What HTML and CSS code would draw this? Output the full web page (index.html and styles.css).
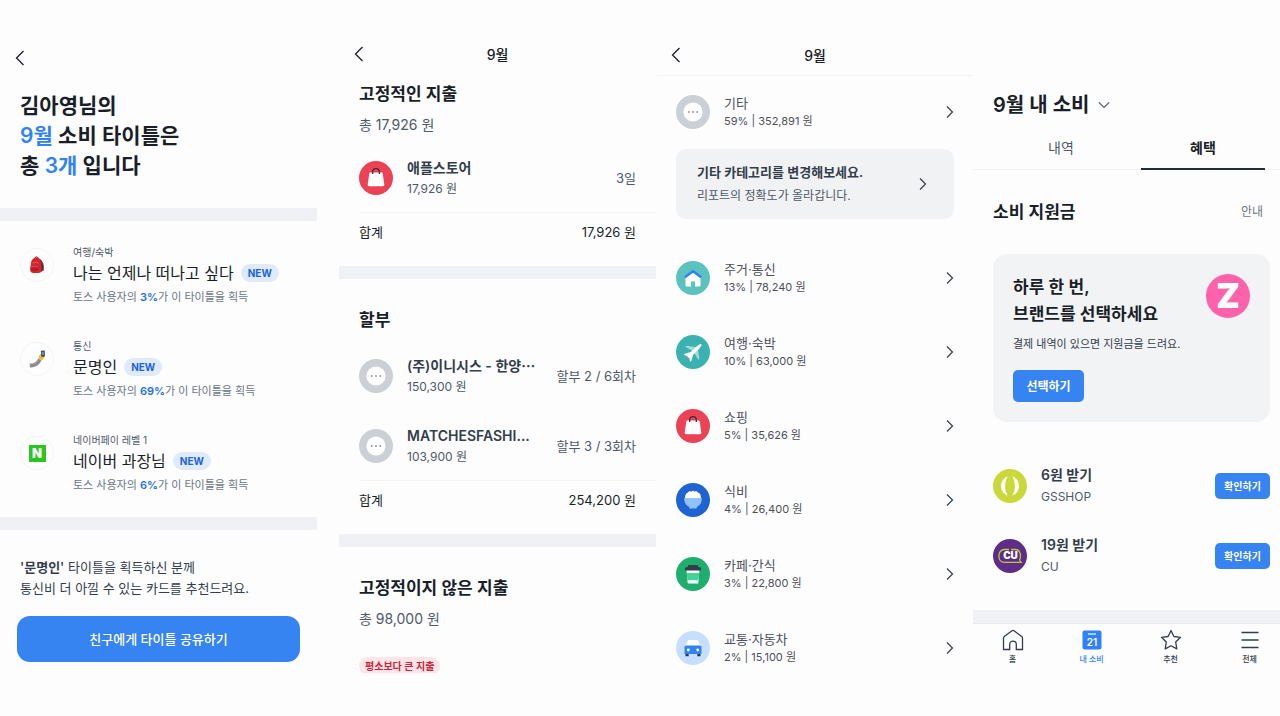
FILE: index.html
```html
<!DOCTYPE html>
<html lang="ko">
<head>
  <meta charset="UTF-8">
  <meta name="viewport" content="width=device-width, initial-scale=1">
  <title>9월 소비</title>
  <link rel="stylesheet" href="styles.css">
</head>
<body>
  <!-- Shared icons -->
  <svg class="sprite" aria-hidden="true">
    <symbol id="back" viewBox="0 0 10 16"><path d="M8.5 1 1.5 8l7 7" fill="none" stroke="currentColor" stroke-width="1.3"/></symbol>
    <symbol id="next" viewBox="0 0 8 14"><path d="M1 1.5 6.5 7 1 12.5" fill="none" stroke="currentColor" stroke-width="1.2"/></symbol>
    <symbol id="etc" viewBox="0 0 34 34">
      <circle cx="17" cy="17" r="17" fill="#cbd0d6"/>
      <circle cx="17" cy="17" r="9.6" fill="#fff"/>
      <g fill="#8b95a1"><circle cx="12.8" cy="17" r=".9"/><circle cx="17" cy="17" r=".9"/><circle cx="21.2" cy="17" r=".9"/></g>
    </symbol>
    <symbol id="bag" viewBox="0 0 34 34">
      <circle cx="17" cy="17" r="17" fill="#eb4255"/>
      <path d="M11.5 11.500h11c.7 0 1.100.4 1.200 1l1.600 11c.1 1-.5 1.700-1.500 1.700H10.200c-1 0-1.600-.7-1.500-1.700l1.600-11c.1-.6.5-1 1.200-1z" fill="#fff"/>
      <path d="M13.700 13v-2.300c0-4.200 6.600-4.200 6.600 0V13" fill="none" stroke="#3a3038" stroke-width="1.3"/>
    </symbol>
  </svg>

  <main class="screens">
    <!-- Titles -->
    <section class="screen titles">
      <header class="topbar">
        <button class="back" aria-label="뒤로"><svg><use href="#back"/></svg></button>
      </header>
      <h1 class="headline">김아영님의<br><em>9월</em> 소비 타이틀은<br>총 <em>3개</em> 입니다</h1>
      <div class="band"></div>
      <ul class="title-list">
        <li>
          <span class="medal">
            <svg width="18" height="18" viewBox="0 0 18 18">
              <path d="M11 3c3 0 4.500 4 4.300 11l-2.300 2z" fill="#5e2630"/>
              <path d="M14 6c1.500 2 1.800 6 1 9" fill="none" stroke="#7d3c40" stroke-width="1"/>
              <path d="M7 2c0-1.500 3-1.500 3 0" fill="none" stroke="#8e1c23" stroke-width="1"/>
              <path d="M3 6.500C3.500 3.500 5.500 1.500 8.500 1.500S13 4 13.200 7.500l.3 7c0 2-1.500 2.500-5.700 2.500-4 0-5.500-.8-5.500-2.800z" fill="#d5252e"/>
              <path d="M2.500 10.500c3-1 5.500-.8 8 0v4c-2 1-6 1-8-.5z" fill="#bb1d27"/>
              <path d="M4.500 7.200c2-1 4-.8 6 0M3 11c2.500-.8 5-.6 7 .2" fill="none" stroke="#f06a68" stroke-width=".7"/>
            </svg>
          </span>
          <div>
            <p class="kind">여행/숙박</p>
            <h2>나는 언제나 떠나고 싶다 <span class="new">NEW</span></h2>
            <p class="rate">토스 사용자의 <b>3%</b>가 이 타이틀을 획득</p>
          </div>
        </li>
        <li>
          <span class="medal">
            <svg width="18" height="18" viewBox="0 0 18 18">
              <path d="M1.500 13.500c4 .4 7-1.500 9-5.500l3 2.500c-2 4.500-6 7-11.500 7z" fill="#9a9a9c"/>
              <path d="M2 16c5 0 8-2 10-6" fill="none" stroke="#777" stroke-width=".8"/>
              <path d="m10.500 8 1-3 2-1.500 3 1.500-.5 3-2.500 2.500z" fill="#f3bd2f"/>
              <path d="m12.800.8 4-.3v6l-3.300.5z" fill="#384859"/>
              <path d="m13.700 1.800 2.200-.1v3l-1.900.3z" fill="#4f9bd0"/>
            </svg>
          </span>
          <div>
            <p class="kind">통신</p>
            <h2>문명인 <span class="new">NEW</span></h2>
            <p class="rate">토스 사용자의 <b>69%</b>가 이 타이틀을 획득</p>
          </div>
        </li>
        <li>
          <span class="medal"><span class="naver">N</span></span>
          <div>
            <p class="kind">네이버페이 레벨 1</p>
            <h2>네이버 과장님 <span class="new">NEW</span></h2>
            <p class="rate">토스 사용자의 <b>6%</b>가 이 타이틀을 획득</p>
          </div>
        </li>
      </ul>
      <div class="band"></div>
      <p class="card-tip"><b>'문명인'</b> 타이틀을 획득하신 분께<br>통신비 더 아낄 수 있는 카드를 추천드려요.</p>
      <button class="share">친구에게 타이틀 공유하기</button>
    </section>

    <!-- Monthly spending -->
    <section class="screen monthly">
      <header class="topbar">
        <button class="back" aria-label="뒤로"><svg><use href="#back"/></svg></button>
        <h1>9월</h1>
      </header>
      <div class="group fixed">
        <h2>고정적인 지출</h2>
        <p class="sum">총 17,926 원</p>
        <ul class="payments">
          <li>
            <svg class="icon"><use href="#bag"/></svg>
            <div><h3>애플스토어</h3><p>17,926 원</p></div>
            <span>3일</span>
          </li>
        </ul>
        <div class="total"><span>합계</span><span>17,926 원</span></div>
      </div>
      <div class="band"></div>
      <div class="group">
        <h2>할부</h2>
        <ul class="payments">
          <li>
            <svg class="icon"><use href="#etc"/></svg>
            <div><h3>(주)이니시스 - 한양⋯</h3><p>150,300 원</p></div>
            <span>할부 2 / 6회차</span>
          </li>
          <li>
            <svg class="icon"><use href="#etc"/></svg>
            <div><h3>MATCHESFASHI...</h3><p>103,900 원</p></div>
            <span>할부 3 / 3회차</span>
          </li>
        </ul>
        <div class="total"><span>합계</span><span>254,200 원</span></div>
      </div>
      <div class="band"></div>
      <div class="group">
        <h2>고정적이지 않은 지출</h2>
        <p class="sum">총 98,000 원</p>
        <div class="flag-row"><span class="flag">평소보다 큰 지출</span></div>
      </div>
    </section>

    <!-- Categories -->
    <section class="screen categories">
      <header class="topbar">
        <button class="back" aria-label="뒤로"><svg><use href="#back"/></svg></button>
        <h1>9월</h1>
      </header>
      <div class="category-list">
        <a class="category" href="#">
          <svg class="icon"><use href="#etc"/></svg>
          <div><h2>기타</h2><p>59% | 352,891 원</p></div>
          <svg class="next"><use href="#next"/></svg>
        </a>
      </div>
      <a class="notice" href="#">
        <div><h2>기타 카테고리를 변경해보세요.</h2><p>리포트의 정확도가 올라갑니다.</p></div>
        <svg class="next"><use href="#next"/></svg>
      </a>
      <div class="category-list rest">
        <a class="category" href="#">
          <svg class="icon" viewBox="0 0 34 34">
            <circle cx="17" cy="17" r="17" fill="#5bc2c0"/>
            <path d="M9.500 15.500 17 10l7.500 5.500v8.700c0 .8-.4 1.200-1.200 1.200H19V20.500h-4v4.900h-4.300c-.8 0-1.200-.4-1.200-1.200z" fill="#fff"/>
            <path d="m8.800 16.300 7.500-5.600c.4-.3 1-.3 1.400 0l7.500 5.600" fill="none" stroke="#3182f6" stroke-width="2.6"/>
          </svg>
          <div><h2>주거·통신</h2><p>13% | 78,240 원</p></div>
          <svg class="next"><use href="#next"/></svg>
        </a>
        <a class="category" href="#">
          <svg class="icon" viewBox="0 0 34 34">
            <circle cx="17" cy="17" r="17" fill="#3bb2b0"/>
            <path d="m9 11.500 2-.7 9.500 1.500-3.500 4zM22.500 25l.8-2-1.500-9.500-4 3.800z" fill="#a5dad9"/>
            <path d="M23.800 9.200c1.600-.8 2.300 0 1.500 1.500-1.200 2-3 4-8.300 9.200l-1.500 5.800-1.500 1-.8-4.300c-1 .4-2 .2-1.500-1.200L8 20l1-1.500 5.500-1.200c5-5 7.300-7 9.300-8.100z" fill="#fff"/>
          </svg>
          <div><h2>여행·숙박</h2><p>10% | 63,000 원</p></div>
          <svg class="next"><use href="#next"/></svg>
        </a>
        <a class="category" href="#">
          <svg class="icon"><use href="#bag"/></svg>
          <div><h2>쇼핑</h2><p>5% | 35,626 원</p></div>
          <svg class="next"><use href="#next"/></svg>
        </a>
        <a class="category" href="#">
          <svg class="icon" viewBox="0 0 34 34">
            <circle cx="17" cy="17" r="17" fill="#1f63d3"/>
            <path d="M9 15.500c0-4 1.500-5.800 3-5.800.5-1.700 2.500-1.900 3.300-1 1-1.300 2.700-1.300 3.500 0 1.200-.9 2.800-.3 3.200 1 1.800 0 3 1.800 3 5.800z" fill="#fff"/>
            <path d="M8.200 15h17.600c0 4.500-1.500 7-5.100 9v1.500h-7.400V24c-3.600-2-5.100-4.500-5.100-9z" fill="#90c2ff"/>
          </svg>
          <div><h2>식비</h2><p>4% | 26,400 원</p></div>
          <svg class="next"><use href="#next"/></svg>
        </a>
        <a class="category" href="#">
          <svg class="icon" viewBox="0 0 34 34">
            <circle cx="17" cy="17" r="17" fill="#1eaf6e"/>
            <path d="M10.500 13h13l-1.200 12.700c-.1.600-.4.900-1 .9h-8.600c-.6 0-.9-.3-1-.9z" fill="#fff"/>
            <path d="M10.800 16h12.400l-.7 7.200h-11z" fill="#44d296"/>
            <path d="M12.500 8h9l1.200 2.200H24c.7 0 1 .3 1 1v2.300H9v-2.300c0-.7.300-1 1-1h1.300z" fill="#333d4b"/>
          </svg>
          <div><h2>카페·간식</h2><p>3% | 22,800 원</p></div>
          <svg class="next"><use href="#next"/></svg>
        </a>
        <a class="category" href="#">
          <svg class="icon" viewBox="0 0 34 34">
            <circle cx="17" cy="17" r="17" fill="#c6deff"/>
            <path d="M13.200 9h7.600c.7 0 1.200.4 1.500 1l2 5H9.700l2-5c.3-.6.800-1 1.500-1z" fill="#fff"/>
            <path d="M9.500 22h3.200v3.200H9.500zM21.300 22h3.200v3.200h-3.200z" fill="#2b3950"/>
            <path d="M10.500 14.500h13c1.200 0 2 .8 2 2V23h-17v-6.500c0-1.200.8-2 2-2z" fill="#3182f6"/>
            <circle cx="12.300" cy="19" r="1.4" fill="#fff"/><circle cx="21.700" cy="19" r="1.4" fill="#fff"/>
          </svg>
          <div><h2>교통·자동차</h2><p>2% | 15,100 원</p></div>
          <svg class="next"><use href="#next"/></svg>
        </a>
      </div>
    </section>

    <!-- Benefits -->
    <section class="screen benefits">
      <h1>9월 내 소비
        <svg width="12" height="8" viewBox="0 0 12 8"><path d="m.8 1.300 5.200 5.200 5.200-5.200" fill="none" stroke="#4e5968" stroke-width="1.2"/></svg>
      </h1>
      <div class="tabs" role="tablist">
        <button role="tab" aria-selected="false">내역</button>
        <button role="tab" aria-selected="true">혜택</button>
      </div>
      <div class="support-head"><h2>소비 지원금</h2><a href="#">안내</a></div>
      <div class="promo">
        <div>
          <h3>하루 한 번,<br>브랜드를 선택하세요</h3>
          <p>결제 내역이 있으면 지원금을 드려요.</p>
          <button>선택하기</button>
        </div>
        <span class="zigzag">Z</span>
      </div>
      <ul class="rewards">
        <li>
          <svg class="icon" viewBox="0 0 34 34">
            <circle cx="17" cy="17" r="17" fill="#c9d93b"/>
            <path d="M14.800 7.500c-9 2.500-9 16.500 0 19-3.600-5-3.600-14 0-19zM19.200 7.500c9 2.500 9 16.500 0 19 3.600-5 3.600-14 0-19z" fill="#fff"/>
          </svg>
          <div><h3>6원 받기</h3><p>GSSHOP</p></div>
          <button>확인하기</button>
        </li>
        <li>
          <svg class="icon" viewBox="0 0 34 34">
            <circle cx="17" cy="17" r="17" fill="#5f2d87"/>
            <path d="M16 10.500h-4.500c-7.500 0-7.500 12.800 0 12.800H28c-1.200-1-1.300-1.800-1.200-3 1.800-5-.3-9.800-4.300-9.800H18" fill="none" stroke="#b4cf3a" stroke-width="1.3"/>
            <text x="17.500" y="20.300" class="cu">CU</text>
          </svg>
          <div><h3>19원 받기</h3><p>CU</p></div>
          <button>확인하기</button>
        </li>
      </ul>
      <div class="band"></div>
      <nav class="tabbar">
        <a href="#">
          <svg viewBox="0 0 22 22"><path d="M1.500 9.200c0-.8.200-1.300.8-1.800L10 1.800c.7-.5 1.300-.5 2 0l7.700 5.600c.6.5.8 1 .8 1.800v11.300h-6.200v-5.200c0-4.300-6.600-4.300-6.600 0v5.200H1.500z" fill="none" stroke="#333d4b" stroke-width="1.3"/></svg>
          홈
        </a>
        <a class="current" href="#">
          <svg viewBox="0 0 22 22"><rect x="1.500" y="1.500" width="19" height="19" rx="2" fill="#3182f6"/><path d="M7 5h8" stroke="#fff" stroke-width="1.2"/><text x="11" y="16.500" class="day">21</text></svg>
          내 소비
        </a>
        <a href="#">
          <svg viewBox="0 0 22 22"><path d="m11 1.500 2.900 6 6.600.8-4.800 4.700 1.100 6.900-5.800-3.200-5.800 3.200L6.300 13 1.500 8.300l6.600-.8z" fill="none" stroke="#333d4b" stroke-width="1.3" stroke-linejoin="round"/></svg>
          추천
        </a>
        <a href="#">
          <svg viewBox="0 0 22 22"><path d="M2.500 3.500h17M2.500 11h17M2.500 18.500h17" stroke="#333d4b" stroke-width="1.3"/></svg>
          전체
        </a>
      </nav>
    </section>
  </main>
</body>
</html>
```

FILE: styles.css
```css
* {
  box-sizing: border-box;
}
body {
  margin: 0;
  background: #fdfdfe;
  color: #191f28;
  font-family: Inter, "Noto Sans CJK KR", sans-serif;
  font-size: 13px;
}
h1, h2, h3, p, ul {
  margin: 0;
  padding: 0;
  font-weight: 400;
}
ul {
  list-style: none;
}
a {
  color: inherit;
  text-decoration: none;
}
button {
  border: none;
  padding: 0 0 2px;
  background: none;
  color: inherit;
  font-family: inherit;
  cursor: pointer;
}
svg {
  display: block;
  flex: none;
}
.sprite {
  position: absolute;
  width: 0;
  height: 0;
}
.screens {
  display: grid;
  grid-template-columns: 339fr 318fr 316fr 307fr;
  min-height: 100vh;
}
.screen {
  min-width: 0;
  overflow: hidden;
}
.titles {
  margin-right: 22px;
}
.monthly {
  margin-right: 1px;
}
.band {
  height: 13px;
  background: #f0f1f4;
}
.icon {
  width: 34px;
  height: 34px;
}
.next {
  width: 8px;
  height: 14px;
  color: #333d4b;
}

/* top bar */
.topbar {
  display: grid;
  grid-template-columns: 26px 1fr 26px;
  align-items: center;
  padding: 42px 15px 0;
  line-height: 26px;
}
.topbar h1 {
  text-align: center;
  font-size: 14px;
  font-weight: 500;
}
.back {
  height: 26px;
}
.back svg {
  width: 10px;
  height: 16px;
}

/* titles */
.titles .topbar {
  padding-top: 46px;
}
.headline {
  padding: 19px 20px 27px;
  font-size: 21px;
  font-weight: 600;
  line-height: 30px;
}
.headline em {
  color: #3182f6;
  font-style: normal;
}
.title-list {
  display: flex;
  flex-direction: column;
  gap: 32px;
  padding: 24px 20px 22px;
}
.title-list li {
  display: flex;
  gap: 19px;
}
.medal {
  display: flex;
  align-items: center;
  justify-content: center;
  width: 34px;
  height: 34px;
  margin-top: 3px;
  border: 1px solid #f3f4f5;
  border-radius: 50%;
}
.naver {
  width: 17px;
  background: #2ac61e;
  color: #fff;
  font-size: 13px;
  font-weight: 900;
  line-height: 17px;
  text-align: center;
}
.kind {
  color: #4e5968;
  font-size: 10px;
  line-height: 14px;
}
.title-list h2 {
  display: flex;
  align-items: center;
  gap: 7px;
  font-size: 16px;
  line-height: 28px;
}
.new {
  padding: 0 7px;
  border-radius: 9px;
  background: #dfeafc;
  color: #1b64da;
  font-size: 10px;
  font-weight: 700;
  line-height: 18px;
}
.rate {
  color: #6b7684;
  font-size: 11px;
  line-height: 20px;
}
.rate b {
  color: #1b6fe8;
  font-weight: 600;
}
.card-tip {
  padding: 27px 20px 17px;
  color: #333d4b;
  line-height: 21px;
}
.card-tip b {
  font-weight: 600;
}
.share {
  display: block;
  width: calc(100% - 34px);
  height: 46px;
  margin: 0 17px;
  border-radius: 13px;
  background: #3683f2;
  color: #fff;
  font-size: 13px;
  font-weight: 500;
}

/* monthly spending */
.group {
  padding: 28px 0 24px 20px;
}
.group.fixed {
  padding-top: 13px;
}
.group h2 {
  font-size: 17px;
  font-weight: 600;
  line-height: 26px;
}
.sum {
  margin-top: 8px;
  color: #4e5968;
  font-size: 14px;
  line-height: 20px;
}
.payments {
  display: flex;
  flex-direction: column;
  gap: 28px;
  margin-top: 22px;
  padding: 0 20px 13px 0;
  line-height: 21px;
}
.payments li {
  display: flex;
  align-items: center;
}
.payments div {
  flex: 1;
  margin-left: 14px;
}
.payments h3 {
  color: #333d4b;
  font-size: 14px;
  font-weight: 600;
}
.payments p {
  color: #4e5968;
  font-size: 12px;
}
.payments span {
  color: #4e5968;
  font-size: 13px;
}
.total {
  display: flex;
  justify-content: space-between;
  padding: 9px 20px 0 0;
  border-top: 1px solid #f2f3f5;
  font-size: 13px;
  line-height: 20px;
}
.flag-row {
  height: 16px;
  margin-top: 28px;
  overflow: hidden;
}
.flag {
  display: block;
  width: fit-content;
  padding: 0 6px;
  border-radius: 9px;
  background: #fde4e7;
  color: #c9243b;
  font-size: 10px;
  font-weight: 600;
  line-height: 18px;
}

/* categories */
.categories .topbar {
  padding: 43px 14px 6px;
  border-bottom: 1px solid #f2f3f5;
}
.category-list {
  display: flex;
  flex-direction: column;
  gap: 38px;
  padding: 18px 19px 0;
}
.category-list.rest {
  padding-top: 41px;
}
.category {
  display: flex;
  align-items: center;
  color: #4e5059;
  line-height: 18px;
}
.category div {
  flex: 1;
  margin-left: 14px;
}
.category h2 {
  font-size: 13px;
}
.category p {
  font-size: 11px;
}
.notice {
  display: flex;
  align-items: center;
  justify-content: space-between;
  margin: 19px 19px 0;
  padding: 12px 27px 12px 21px;
  border-radius: 10px;
  background: #f1f2f4;
  line-height: 23px;
}
.notice h2 {
  color: #333d4b;
  font-size: 13px;
  font-weight: 600;
}
.notice p {
  color: #4e5968;
  font-size: 12px;
}

/* benefits */
.benefits h1 {
  display: flex;
  align-items: center;
  gap: 9px;
  padding: 91px 20px 7px;
  font-size: 20px;
  font-weight: 600;
  line-height: 28px;
}
.tabs {
  display: flex;
  gap: 18px;
  height: 44px;
  padding: 0 15px 0 26px;
  box-shadow: inset 0 -1px #f0f1f3;
}
.tabs button {
  flex: 1;
  color: #4e5968;
  font-size: 14px;
}
.tabs button[aria-selected="true"] {
  box-shadow: inset 0 -2px #222b3a;
  color: #191f28;
  font-weight: 600;
}
.support-head {
  display: flex;
  align-items: center;
  justify-content: space-between;
  padding: 29px 17px 29px 20px;
  line-height: 26px;
}
.support-head h2 {
  font-size: 17px;
  font-weight: 600;
}
.support-head a {
  color: #6b7684;
  font-size: 12px;
}
.promo {
  display: flex;
  justify-content: space-between;
  margin: 0 10px 0 20px;
  padding: 20px;
  border-radius: 14px;
  background: #f1f3f4;
}
.promo h3 {
  font-size: 17px;
  font-weight: 600;
  line-height: 27px;
}
.promo p {
  margin: 7px 0 17px;
  color: #333d4b;
  font-size: 11px;
  line-height: 18px;
}
.promo button,
.rewards button {
  border-radius: 5px;
  background: #3683f2;
  color: #fff;
  font-weight: 600;
}
.promo button {
  width: 71px;
  height: 32px;
  font-size: 12px;
}
.zigzag {
  width: 44px;
  height: 44px;
  border-radius: 50%;
  background: #ff62ab;
  color: #fff;
  font-size: 34px;
  font-weight: 900;
  line-height: 44px;
  text-align: center;
}
.rewards {
  display: flex;
  flex-direction: column;
  gap: 26px;
  padding: 42px 10px 32px 20px;
}
.rewards li {
  display: flex;
  align-items: center;
  line-height: 22px;
}
.rewards div {
  flex: 1;
  margin-left: 14px;
}
.rewards h3 {
  color: #333d4b;
  font-size: 14px;
  font-weight: 600;
}
.rewards p {
  color: #4e5968;
  font-size: 12px;
}
.rewards button {
  width: 55px;
  height: 26px;
  font-size: 10px;
}
.cu {
  fill: #fff;
  font-size: 10px;
  font-weight: 900;
  text-anchor: middle;
}
.day {
  fill: #fff;
  font-size: 10px;
  font-weight: 600;
  text-anchor: middle;
}
.tabbar {
  display: flex;
  border-top: 1px solid #e5e8eb;
}
/* the last item runs past the edge of the screen */
.tabbar a {
  display: flex;
  flex: 0 0 79px;
  flex-direction: column;
  align-items: center;
  gap: 2px;
  padding-top: 5px;
  color: #333d4b;
  font-size: 8px;
  font-weight: 500;
  line-height: 12px;
}
.tabbar svg {
  width: 22px;
  height: 22px;
}
.tabbar .current {
  color: #3182f6;
}
```
